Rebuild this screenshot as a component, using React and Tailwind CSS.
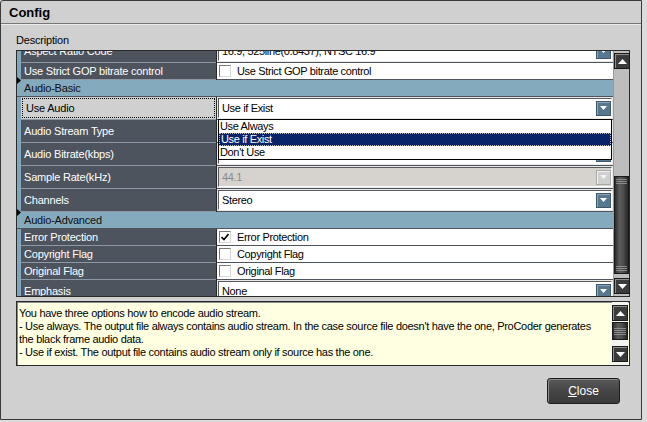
import React from "react";

const Arrow = ({ disabled }) => (
  <div
    className={`w-[15px] h-[15px] flex items-center justify-center shrink-0 ${
      disabled
        ? "bg-[#cfcfcf] border border-[#a8a8a8] shadow-[inset_1px_1px_0_#f2f2f2]"
        : "bg-[#58788f] border border-[#3d566a] shadow-[inset_1px_1px_0_#8aa6ba]"
    }`}
  >
    <svg width="7" height="4" viewBox="0 0 7 4">
      <path d="M0 0 L7 0 L3.5 4Z" fill={disabled ? "#f4f4f4" : "#ffffff"} />
    </svg>
  </div>
);

const Marker = () => (
  <svg className="absolute left-0 top-[-3px]" width="4" height="7" viewBox="0 0 4 7">
    <path d="M0 0 L4 3.5 L0 7Z" fill="#000" />
  </svg>
);

const NameCell = ({ name, selected }) => (
  <div className="flex shrink-0">
    <div className="w-[4px] bg-[#7ea5b9]" />
    <div
      className={`w-[195px] border-b border-[#8c99a5] flex items-stretch ${
        selected ? "bg-[#d0d0d0]" : "bg-[#4d545d]"
      }`}
    >
      <div
        className={`flex-1 flex items-center pl-[3px] tracking-[-0.2px] whitespace-nowrap ${
          selected
            ? "text-black border border-dotted border-black m-[1px] pl-[2px]"
            : "text-white"
        }`}
      >
        {name}
      </div>
    </div>
    <div className="w-px bg-[#262a2f]" />
  </div>
);

const DropRow = ({ name, value, selected, disabled, children }) => (
  <div className="flex h-[23px] relative">
    <NameCell name={name} selected={selected} />
    <div className="flex-1 border-b border-[#4d545d] bg-[#e8e8e8] pt-px pl-px pr-px relative">
      <div
        className={`h-[20px] border-t border-l border-[#5a5a5a] border-b border-b-[#ffffff] border-r border-r-[#ffffff] flex items-center ${
          disabled ? "bg-[#d6d3ce] text-[#8a8a8a]" : "bg-white text-black"
        }`}
      >
        <span className="flex-1 pl-[3px] tracking-[-0.35px] whitespace-nowrap overflow-hidden">
          {value}
        </span>
        <Arrow disabled={disabled} />
      </div>
      {children}
    </div>
  </div>
);

const Check = ({ checked }) => (
  <div className="w-[12px] h-[12px] bg-white border-t border-l border-[#7a7a7a] border-b border-b-[#d8d8d8] border-r border-r-[#d8d8d8] flex items-center justify-center shrink-0">
    {checked && (
      <svg width="8" height="8" viewBox="0 0 8 8">
        <path d="M0.5 4 L3 6.5 L7.5 1" stroke="#000" strokeWidth="1.6" fill="none" />
      </svg>
    )}
  </div>
);

const CheckRow = ({ name, checked }) => (
  <div className="flex h-[17px]">
    <NameCell name={name} />
    <div className="flex-1 border-b border-[#4d545d] bg-white flex items-center pl-[2px]">
      <Check checked={checked} />
      <span className="pl-[6px] text-black tracking-[-0.35px] whitespace-nowrap">{name}</span>
    </div>
  </div>
);

const Category = ({ name }) => (
  <div className="flex h-[17px] relative bg-[#84aabd] border-b border-[#4d545d] items-center">
    <Marker />
    <span className="pl-[7px] text-[#101010] tracking-[-0.2px]">{name}</span>
  </div>
);

const SBtn = ({ up }) => (
  <div className="w-[16px] h-[16px] bg-[#3b3b3b] border border-[#191919] shadow-[inset_1px_1px_0_#8c8c8c] flex items-center justify-center shrink-0">
    <svg width="9" height="5" viewBox="0 0 9 5">
      <path d={up ? "M0 5 L4.5 0 L9 5Z" : "M0 0 L9 0 L4.5 5Z"} fill="#fff" />
    </svg>
  </div>
);

const Grip = () => (
  <div className="flex flex-col gap-[1px] px-[1px]">
    <div className="h-px bg-[#8a8a8a]" />
    <div className="h-px bg-[#8a8a8a]" />
    <div className="h-px bg-[#8a8a8a]" />
  </div>
);

export default function App() {
  return (
    <div className="w-[647px] h-[422px] bg-[#dcdcdc] font-['Liberation_Sans',Arial,sans-serif] text-[11px] leading-[13px]">
      <div className="w-[642px] h-[420px] bg-[#d0d0d0] border border-[#3a3a3a] rounded-tl-[3px] flex flex-col">
        <div className="h-[22px] pl-[8px] flex items-center text-[13px] font-bold text-black">
          Config
        </div>
        <div className="h-px bg-[#777777]" />
        <div className="h-px bg-[#ececec]" />
        <div className="pl-[15px] flex flex-col">
          <div className="mt-[9px] text-black tracking-[-0.2px]">Description</div>
          {/* Property grid */}
          <div className="mt-[3px] w-[614px] h-[247px] border border-[#2a2a2a] flex bg-[#4d545d]">
            <div className="w-[596px] overflow-hidden relative">
              <div className="-mt-[11px] flex flex-col">
                <DropRow name="Aspect Ratio Code" value="16:9, 525line(0.8437), NTSC 16:9" />
                <CheckRow name="Use Strict GOP bitrate control" />
                <Category name="Audio-Basic" />
                <DropRow name="Use Audio" value="Use if Exist" selected>
                  <div className="absolute left-px top-[22px] w-[394px] h-[41px] bg-white border border-black z-10 flex flex-col text-black tracking-[-0.35px]">
                    <div className="h-[13px] pl-[1px] flex items-center">Use Always</div>
                    <div className="h-[13px] pl-[1px] flex items-center bg-[#0a246a] text-white border border-dotted border-[#c0c0c0]">
                      Use if Exist
                    </div>
                    <div className="h-[13px] pl-[1px] flex items-center">Don't Use</div>
                  </div>
                </DropRow>
                <DropRow name="Audio Stream Type" value="MPEG-1 Layer2" />
                <DropRow name="Audio Bitrate(kbps)" value="224" />
                <DropRow name="Sample Rate(kHz)" value="44.1" disabled />
                <DropRow name="Channels" value="Stereo" />
                <Category name="Audio-Advanced" />
                <CheckRow name="Error Protection" checked />
                <CheckRow name="Copyright Flag" />
                <CheckRow name="Original Flag" />
                <DropRow name="Emphasis" value="None" />
              </div>
            </div>
            <div className="w-[16px] bg-[#bdbdbd] flex flex-col border-l border-[#9a9a9a]">
              <div className="mt-[2px]">
                <SBtn up />
              </div>
              <div className="flex-1 flex flex-col">
                <div className="mt-[107px] h-[98px] border border-[#1a1a1a] bg-[linear-gradient(to_right,#2c2c2c,#5c5c5c_35%,#4c4c4c_65%,#262626)] flex flex-col justify-between py-[2px]">
                  <Grip />
                  <Grip />
                </div>
              </div>
              <div className="mb-[2px]">
                <SBtn />
              </div>
            </div>
          </div>
          {/* Description box */}
          <div className="mt-[4px] w-[614px] h-[65px] border border-[#2a2a2a] bg-[#ffffe1] flex shadow-[inset_1px_1px_0_#8a8a8a]">
            <div className="flex-1 pl-[2px] pt-[5px] text-black tracking-[-0.3px] whitespace-nowrap overflow-hidden">
              <div>You have three options how to encode audio stream.</div>
              <div>- Use always. The output file always contains audio stream. In the case source file doesn't have the one, ProCoder generates</div>
              <div>the black frame audio data.</div>
              <div>- Use if exist. The output file contains audio stream only if source has the one.</div>
            </div>
            <div className="w-[16px] mr-[1px] flex flex-col py-[3px] bg-[#f4f4f0]">
              <SBtn up />
              <div className="flex-1 flex flex-col">
                <div className="mt-[1px] h-[18px] border border-[#1a1a1a] bg-[linear-gradient(to_right,#2c2c2c,#5c5c5c_35%,#4c4c4c_65%,#262626)] flex flex-col justify-center">
                  <div className="flex flex-col gap-[1px] px-[1px]">
                    <div className="h-px bg-[#8a8a8a]" />
                    <div className="h-px bg-[#8a8a8a]" />
                    <div className="h-px bg-[#8a8a8a]" />
                    <div className="h-px bg-[#8a8a8a]" />
                  </div>
                </div>
              </div>
              <SBtn />
            </div>
          </div>
          {/* Close */}
          <div className="mt-[12px] flex justify-end pr-[10px] w-[614px]">
            <div className="w-[73px] h-[26px] rounded-[3px] border border-[#1e1e1e] bg-[linear-gradient(to_bottom,#5a5a5a,#454545_50%,#3a3a3a)] shadow-[inset_1px_1px_0_#8a8a8a] flex items-center justify-center text-white text-[12px]">
              <span>
                <span className="underline">C</span>lose
              </span>
            </div>
          </div>
        </div>
      </div>
    </div>
  );
}
